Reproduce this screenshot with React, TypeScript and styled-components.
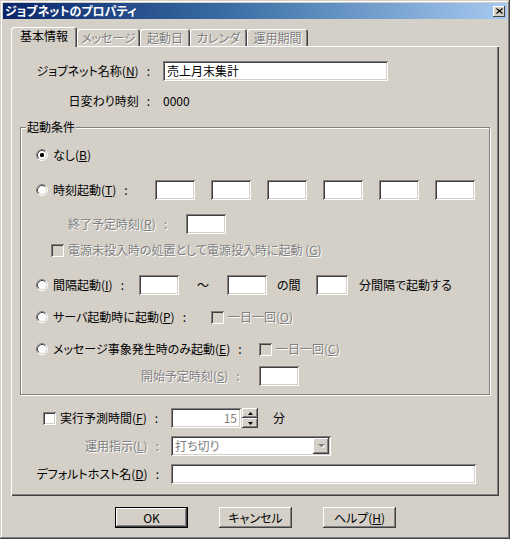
import styled, { createGlobalStyle } from "styled-components";

const GlobalStyle = createGlobalStyle`
  html, body {
    margin: 0;
    padding: 0;
    background: #d4d0c8;
  }
  body {
    font-family: "Noto Sans CJK JP", "Noto Sans", sans-serif;
    font-size: 12px;
    line-height: 14px;
    color: #000;
    font-feature-settings: "palt";
  }
`;

const sunken = `
  box-shadow: inset 1px 1px #808080, inset -1px -1px #fff, inset 2px 2px #404040, inset -2px -2px #d4d0c8;
`;
const raised = `
  box-shadow: inset -1px -1px #404040, inset 1px 1px #fff, inset -2px -2px #808080, inset 2px 2px #d4d0c8;
`;

const Window = styled.div`
  width: 510px;
  height: 539px;
  box-sizing: border-box;
  padding: 3px;
  background: #d4d0c8;
  box-shadow: inset -1px -1px #404040, inset 1px 1px #d4d0c8, inset -2px -2px #808080, inset 2px 2px #fff;
  display: flex;
  flex-direction: column;
`;

const TitleBar = styled.div`
  height: 16px;
  flex-shrink: 0;
  display: flex;
  align-items: center;
  justify-content: space-between;
  padding-left: 2px;
  background: linear-gradient(90deg, #0a246a 0%, #3a6ea5 45%, #a6caf0 100%);
  color: #fff;
  font-weight: bold;
`;

const CloseButton = styled.div`
  width: 12px;
  height: 11px;
  margin-right: 2px;
  box-sizing: border-box;
  background: #d4d0c8;
  display: flex;
  align-items: center;
  justify-content: center;
  box-shadow: inset -1px -1px #404040, inset 1px 1px #fff;
`;

const Body = styled.div`
  margin: 8px 0 0 8px;
  display: flex;
  flex-direction: column;
`;

const TabStrip = styled.div`
  height: 19px;
  display: flex;
  align-items: flex-end;
`;

const Tab = styled.div<{ $w: number; $active?: boolean }>`
  width: ${(p) => p.$w}px;
  height: ${(p) => (p.$active ? 20 : 17)}px;
  margin-bottom: ${(p) => (p.$active ? -1 : 0)}px;
  box-sizing: border-box;
  position: relative;
  z-index: ${(p) => (p.$active ? 2 : 0)};
  background: #d4d0c8;
  border-top-left-radius: 3px;
  border-top-right-radius: 3px;
  box-shadow: inset 1px 1px #fff, inset -1px 0 #404040, inset -2px 0 #808080;
  display: flex;
  align-items: center;
  justify-content: center;
  padding-bottom: ${(p) => (p.$active ? 2 : 0)}px;
  color: ${(p) => (p.$active ? "#000" : "#808080")};
  text-shadow: ${(p) => (p.$active ? "none" : "1px 1px 0 #fff")};
  white-space: nowrap;
`;

const Panel = styled.div`
  width: 488px;
  height: 450px;
  box-sizing: border-box;
  position: relative;
  z-index: 1;
  box-shadow: inset 1px 1px #fff, inset -1px -1px #404040, inset -2px -2px #808080;
  display: flex;
  flex-direction: column;
  padding-top: 15px;
`;

const Row = styled.div<{ $top: number; $left?: number; $h?: number }>`
  display: flex;
  align-items: center;
  flex-shrink: 0;
  height: ${(p) => p.$h ?? 20}px;
  margin-top: ${(p) => p.$top}px;
  padding-left: ${(p) => p.$left ?? 0}px;
  white-space: nowrap;
`;

const Cell = styled.div<{ $w: number; $align?: "left" | "right" | "center"; $padR?: number; $padL?: number }>`
  width: ${(p) => p.$w}px;
  flex-shrink: 0;
  box-sizing: border-box;
  display: flex;
  align-items: center;
  justify-content: ${(p) =>
    p.$align === "right" ? "flex-end" : p.$align === "center" ? "center" : "flex-start"};
  padding-right: ${(p) => p.$padR ?? 0}px;
  padding-left: ${(p) => p.$padL ?? 0}px;
`;

const Dim = styled.span`
  color: #808080;
  text-shadow: 1px 1px 0 #fff;
`;

const U = styled.span`
  text-decoration: underline;
  text-underline-offset: 1px;
`;

const Colon = styled.span`
  margin-left: 8px;
`;

const Field = styled.div<{ $w: number; $right?: boolean }>`
  width: ${(p) => p.$w}px;
  height: 20px;
  flex-shrink: 0;
  box-sizing: border-box;
  background: #fff;
  ${sunken}
  display: flex;
  align-items: center;
  justify-content: ${(p) => (p.$right ? "flex-end" : "flex-start")};
  padding: 0 4px;
`;

const Gap = styled.span<{ $w: number }>`
  display: inline-block;
  width: ${(p) => p.$w}px;
  flex-shrink: 0;
`;

const Group = styled.div`
  position: relative;
  margin: 16px 0 0 9px;
  width: 470px;
  height: 268px;
  box-sizing: border-box;
  border: 1px solid #808080;
  box-shadow: 1px 1px 0 #fff, inset 1px 1px 0 #fff;
  display: flex;
  flex-direction: column;
  flex-shrink: 0;
`;

const Legend = styled.div`
  position: absolute;
  top: -8px;
  left: 5px;
  padding: 0 1px;
  background: #d4d0c8;
`;

const CheckBox = styled.span<{ $disabled?: boolean }>`
  width: 13px;
  height: 13px;
  flex-shrink: 0;
  box-sizing: border-box;
  background: ${(p) => (p.$disabled ? "#d4d0c8" : "#fff")};
  ${sunken}
  margin-right: 4px;
`;

const SpinBox = styled.div`
  display: flex;
  flex-shrink: 0;
`;

const SpinButtons = styled.div`
  display: flex;
  flex-direction: column;
  margin-left: 1px;
`;

const SpinButton = styled.div`
  width: 16px;
  height: 10px;
  box-sizing: border-box;
  background: #d4d0c8;
  ${raised}
  display: flex;
  align-items: center;
  justify-content: center;
`;

const Select = styled.div<{ $w: number }>`
  width: ${(p) => p.$w}px;
  height: 20px;
  box-sizing: border-box;
  background: #fff;
  ${sunken}
  display: flex;
  align-items: center;
  justify-content: space-between;
  padding: 2px 2px 2px 4px;
  flex-shrink: 0;
`;

const DropButton = styled.div`
  width: 16px;
  height: 16px;
  box-sizing: border-box;
  background: #d4d0c8;
  ${raised}
  display: flex;
  align-items: center;
  justify-content: center;
`;

const ButtonBar = styled.div`
  display: flex;
  gap: 31px;
  margin-top: 11px;
  padding-left: 104px;
`;

const Button = styled.div<{ $default?: boolean }>`
  width: 73px;
  height: 21px;
  box-sizing: border-box;
  background: #d4d0c8;
  display: flex;
  align-items: center;
  justify-content: center;
  ${(p) =>
    p.$default
      ? "border: 1px solid #000; box-shadow: inset -1px -1px #404040, inset 1px 1px #fff, inset -2px -2px #808080;"
      : raised}
`;

const Radio = ({ checked }: { checked?: boolean }) => (
  <svg width="12" height="12" viewBox="0 0 12 12" style={{ flexShrink: 0, marginRight: 5 }}>
    <circle cx="6" cy="6" r="5" fill="#fff" />
    <path d="M2.11 9.89 A5.5 5.5 0 0 1 9.89 2.11" stroke="#808080" fill="none" />
    <path d="M9.89 2.11 A5.5 5.5 0 0 1 2.11 9.89" stroke="#fff" fill="none" />
    <path d="M2.82 9.18 A4.5 4.5 0 0 1 9.18 2.82" stroke="#404040" fill="none" />
    <path d="M9.18 2.82 A4.5 4.5 0 0 1 2.82 9.18" stroke="#d4d0c8" fill="none" />
    {checked && <rect x="4" y="4" width="4" height="4" rx="1.5" fill="#000" />}
  </svg>
);

const Arrow = ({ up, dim }: { up?: boolean; dim?: boolean }) => (
  <svg width="7" height="4" viewBox="0 0 7 4">
    {dim && <path d={up ? "M1 4 L4.5 0.5 L8 4 Z" : "M1 1 L8 1 L4.5 4.5 Z"} fill="#fff" />}
    <path d={up ? "M0 3.5 L3.5 0 L7 3.5 Z" : "M0 0 L7 0 L3.5 3.5 Z"} fill={dim ? "#808080" : "#000"} />
  </svg>
);

const SmallArrow = ({ up }: { up?: boolean }) => (
  <svg width="5" height="3" viewBox="0 0 5 3">
    <path d={up ? "M0 3 L2.5 0 L5 3 Z" : "M0 0 L5 0 L2.5 3 Z"} fill="#000" />
  </svg>
);

const App = () => {
  return (
    <>
      <GlobalStyle />
      <Window>
        <TitleBar>
          <span>ジョブネットのプロパティ</span>
          <CloseButton>
            <svg width="7" height="6" viewBox="0 0 7 6">
              <path d="M0.5 0.5 L6.5 5.5 M6.5 0.5 L0.5 5.5" stroke="#000" strokeWidth="1.2" />
            </svg>
          </CloseButton>
        </TitleBar>
        <Body>
          <TabStrip>
            <Tab $w={66} $active>基本情報</Tab>
            <Tab $w={63}>メッセージ</Tab>
            <Tab $w={50}>起動日</Tab>
            <Tab $w={57}>カレンダ</Tab>
            <Tab $w={61}>運用期間</Tab>
          </TabStrip>
          <Panel>
            <Row $top={0}>
              <Cell $w={139} $align="right">
                ジョブネット名称(<U>N</U>)<Colon>:</Colon>
              </Cell>
              <Gap $w={13} />
              <Field $w={225}>売上月末集計</Field>
            </Row>
            <Row $top={10}>
              <Cell $w={139} $align="right">
                日変わり時刻<Colon>:</Colon>
              </Cell>
              <Gap $w={13} />
              <span>0000</span>
            </Row>

            <Group>
              <Legend>起動条件</Legend>
              <Row $top={17} $left={15}>
                <Radio checked />
                なし(<U>B</U>)
              </Row>
              <Row $top={15} $left={15}>
                <Cell $w={119}>
                  <Radio />
                  時刻起動(<U>T</U>)<Colon>:</Colon>
                </Cell>
                <Field $w={40} />
                <Gap $w={16} />
                <Field $w={40} />
                <Gap $w={16} />
                <Field $w={40} />
                <Gap $w={16} />
                <Field $w={40} />
                <Gap $w={16} />
                <Field $w={40} />
                <Gap $w={16} />
                <Field $w={40} />
              </Row>
              <Row $top={14} $left={47}>
                <Cell $w={118}>
                  <Dim>
                    終了予定時刻(<U>R</U>)<Colon>:</Colon>
                  </Dim>
                </Cell>
                <Field $w={40} />
              </Row>
              <Row $top={8} $left={30} $h={16}>
                <CheckBox $disabled />
                <Dim>
                  電源未投入時の処置として電源投入時に起動 (<U>G</U>)
                </Dim>
              </Row>
              <Row $top={17} $left={15}>
                <Cell $w={103}>
                  <Radio />
                  間隔起動(<U>I</U>)<Colon>:</Colon>
                </Cell>
                <Field $w={40} />
                <Cell $w={48} $align="center">～</Cell>
                <Field $w={40} />
                <Cell $w={49} $padL={10}>の間</Cell>
                <Field $w={32} />
                <Gap $w={11} />
                <span>分間隔で起動する</span>
              </Row>
              <Row $top={12} $left={15}>
                <Cell $w={175}>
                  <Radio />
                  サーバ起動時に起動(<U>P</U>)<Colon>:</Colon>
                </Cell>
                <CheckBox $disabled />
                <Dim>
                  一日一回(<U>O</U>)
                </Dim>
              </Row>
              <Row $top={12} $left={15}>
                <Cell $w={223}>
                  <Radio />
                  メッセージ事象発生時のみ起動(<U>E</U>)<Colon>:</Colon>
                </Cell>
                <CheckBox $disabled />
                <Dim>
                  一日一回(<U>C</U>)
                </Dim>
              </Row>
              <Row $top={7} $left={120}>
                <Cell $w={118}>
                  <Dim>
                    開始予定時刻(<U>S</U>)<Colon>:</Colon>
                  </Dim>
                </Cell>
                <Field $w={40} />
              </Row>
            </Group>

            <Row $top={13} $left={32}>
              <Cell $w={128}>
                <CheckBox />
                実行予測時間(<U>F</U>)<Colon>:</Colon>
              </Cell>
              <SpinBox>
                <Field $w={70} $right>
                  <Dim>15</Dim>
                </Field>
                <SpinButtons>
                  <SpinButton>
                    <SmallArrow up />
                  </SpinButton>
                  <SpinButton>
                    <SmallArrow />
                  </SpinButton>
                </SpinButtons>
              </SpinBox>
              <Gap $w={15} />
              <span>分</span>
            </Row>
            <Row $top={8}>
              <Cell $w={160} $align="right" $padR={12}>
                <Dim>
                  運用指示(<U>L</U>)<Colon>:</Colon>
                </Dim>
              </Cell>
              <Select $w={160}>
                <Dim>打ち切り</Dim>
                <DropButton>
                  <Arrow dim />
                </DropButton>
              </Select>
            </Row>
            <Row $top={8}>
              <Cell $w={160} $align="right" $padR={12}>
                デフォルトホスト名(<U>D</U>)<Colon>:</Colon>
              </Cell>
              <Field $w={305} />
            </Row>
          </Panel>
          <ButtonBar>
            <Button $default>OK</Button>
            <Button>キャンセル</Button>
            <Button>
              ヘルプ(<U>H</U>)
            </Button>
          </ButtonBar>
        </Body>
      </Window>
    </>
  );
};

export default App;
